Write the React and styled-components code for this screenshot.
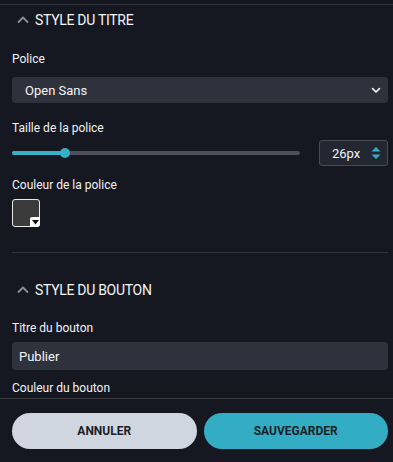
import styled, { createGlobalStyle } from "styled-components";

const GlobalStyle = createGlobalStyle`
  html, body {
    margin: 0;
    padding: 0;
    background: #151821;
    font-family: Roboto, "Noto Sans", sans-serif;
    color: #f1f3f6;
  }
  * { box-sizing: border-box; }
`;

export default function App() {
  return (
    <Page>
      <GlobalStyle />
      <Scroll>
        <Divider $top />
        <SectionHeader>
          <Chevron />
          STYLE DU TITRE
        </SectionHeader>

        <Field $space={16}>
          <Label $gap={10}>Police</Label>
          <Select>
            Open Sans
            <svg width="12" height="12" viewBox="0 0 12 12">
              <path d="M2.5 4.5 L6 8 L9.5 4.5" fill="none" stroke="#fff" strokeWidth="1.6" strokeLinecap="round" strokeLinejoin="round" />
            </svg>
          </Select>
        </Field>

        <Field $space={17}>
          <Label $gap={4}>Taille de la police</Label>
          <SliderRow>
            <Track>
              <Fill style={{ width: "18.4%" }} />
              <Thumb style={{ left: "18.4%" }} />
            </Track>
            <NumberBox>
              26px
              <svg width="12" height="16" viewBox="0 0 12 16">
                <path d="M1.5 6.5 L6 2 L10.5 6.5 Z" fill="#35b0c6" />
                <path d="M1.5 9.5 L6 14 L10.5 9.5 Z" fill="#35b0c6" />
              </svg>
            </NumberBox>
          </SliderRow>
        </Field>

        <Field $space={11}>
          <Label $gap={6}>Couleur de la police</Label>
          <Swatch $color="#3b3b3b">
            <SwatchCorner>
              <svg width="7" height="5" viewBox="0 0 7 5">
                <path d="M0 0 L7 0 L3.5 4.5 Z" fill="#111" />
              </svg>
            </SwatchCorner>
          </Swatch>
        </Field>

        <Divider />

        <SectionHeader $space={22}>
          <Chevron />
          STYLE DU BOUTON
        </SectionHeader>

        <Field $space={15}>
          <Label $gap={6}>Titre du bouton</Label>
          <TextInput>Publier</TextInput>
        </Field>

        <Field $space={10}>
          <Label>Couleur du bouton</Label>
        </Field>
      </Scroll>

      <Footer>
        <Button $variant="cancel">ANNULER</Button>
        <Button $variant="save">SAUVEGARDER</Button>
      </Footer>
    </Page>
  );
}

function Chevron() {
  return (
    <ChevronIcon width="12" height="12" viewBox="0 0 12 12">
      <path d="M1.5 8 L6 3.5 L10.5 8" fill="none" stroke="#8a8e96" strokeWidth="1.8" strokeLinecap="round" strokeLinejoin="round" />
    </ChevronIcon>
  );
}

const Page = styled.div`
  width: 393px;
  height: 462px;
  display: flex;
  flex-direction: column;
  background: #151821;
`;

const Scroll = styled.div`
  flex: 1;
  overflow: hidden;
  padding: 0 5px 0 12px;
`;

const Divider = styled.div`
  flex-shrink: 0;
  height: 1px;
  background: #30333b;
  margin: ${(p) => (p.$top ? "4px -12px 0" : "25px 0 0")};
`;

const SectionHeader = styled.div`
  display: flex;
  align-items: center;
  gap: 6px;
  padding-left: 5px;
  height: 30px;
  margin-top: ${(p) => p.$space || 0}px;
  font-size: 14px;
  letter-spacing: -0.3px;
  color: #f4f5f7;
`;

const ChevronIcon = styled.svg`
  flex-shrink: 0;
`;

const Field = styled.div`
  display: flex;
  flex-direction: column;
  margin-top: ${(p) => p.$space}px;
`;

const Label = styled.div`
  font-size: 12px;
  line-height: 16px;
  color: #f1f3f6;
  margin-bottom: ${(p) => p.$gap || 0}px;
`;

const Select = styled.div`
  height: 26px;
  border-radius: 4px;
  background: #2e323c;
  display: flex;
  align-items: center;
  justify-content: space-between;
  padding: 0 6px 0 13px;
  font-size: 13px;
  color: #f4f5f7;
`;

const TextInput = styled(Select)`
  height: 28px;
  padding-left: 7px;
`;

const SliderRow = styled.div`
  display: flex;
  align-items: center;
  gap: 19px;
`;

const Track = styled.div`
  position: relative;
  flex: 1;
  height: 4px;
  border-radius: 2px;
  background: #4a505c;
`;

const Fill = styled.div`
  position: absolute;
  left: 0;
  top: 0;
  bottom: 0;
  border-radius: 2px;
  background: #35b0c6;
`;

const Thumb = styled.div`
  position: absolute;
  top: 50%;
  width: 10px;
  height: 10px;
  border-radius: 50%;
  background: #35b0c6;
  transform: translate(-50%, -50%);
`;

const NumberBox = styled.div`
  width: 69px;
  height: 26px;
  border: 1px solid #474b55;
  border-radius: 3px;
  background: #232731;
  display: flex;
  align-items: center;
  justify-content: space-between;
  padding: 0 5px 0 12px;
  font-size: 13px;
`;

const Swatch = styled.div`
  position: relative;
  width: 28px;
  height: 28px;
  border: 1px solid #e8e8e8;
  border-radius: 3px;
  background: ${(p) => p.$color};
`;

const SwatchCorner = styled.div`
  position: absolute;
  right: -1px;
  bottom: -1px;
  width: 10px;
  height: 10px;
  background: #fff;
  border-radius: 2px 0 3px 0;
  display: flex;
  align-items: center;
  justify-content: center;
`;

const Footer = styled.div`
  flex-shrink: 0;
  height: 64px;
  border-top: 1px solid #3a3c42;
  display: flex;
  gap: 7px;
  padding: 14px 5px 0 12px;
`;

const Button = styled.div`
  flex: 1;
  height: 36px;
  border-radius: 18px;
  display: flex;
  align-items: center;
  justify-content: center;
  font-size: 12px;
  font-weight: 700;
  color: #1b1f27;
  background: ${(p) => (p.$variant === "save" ? "#33adc4" : "#d0d6e0")};
`;
